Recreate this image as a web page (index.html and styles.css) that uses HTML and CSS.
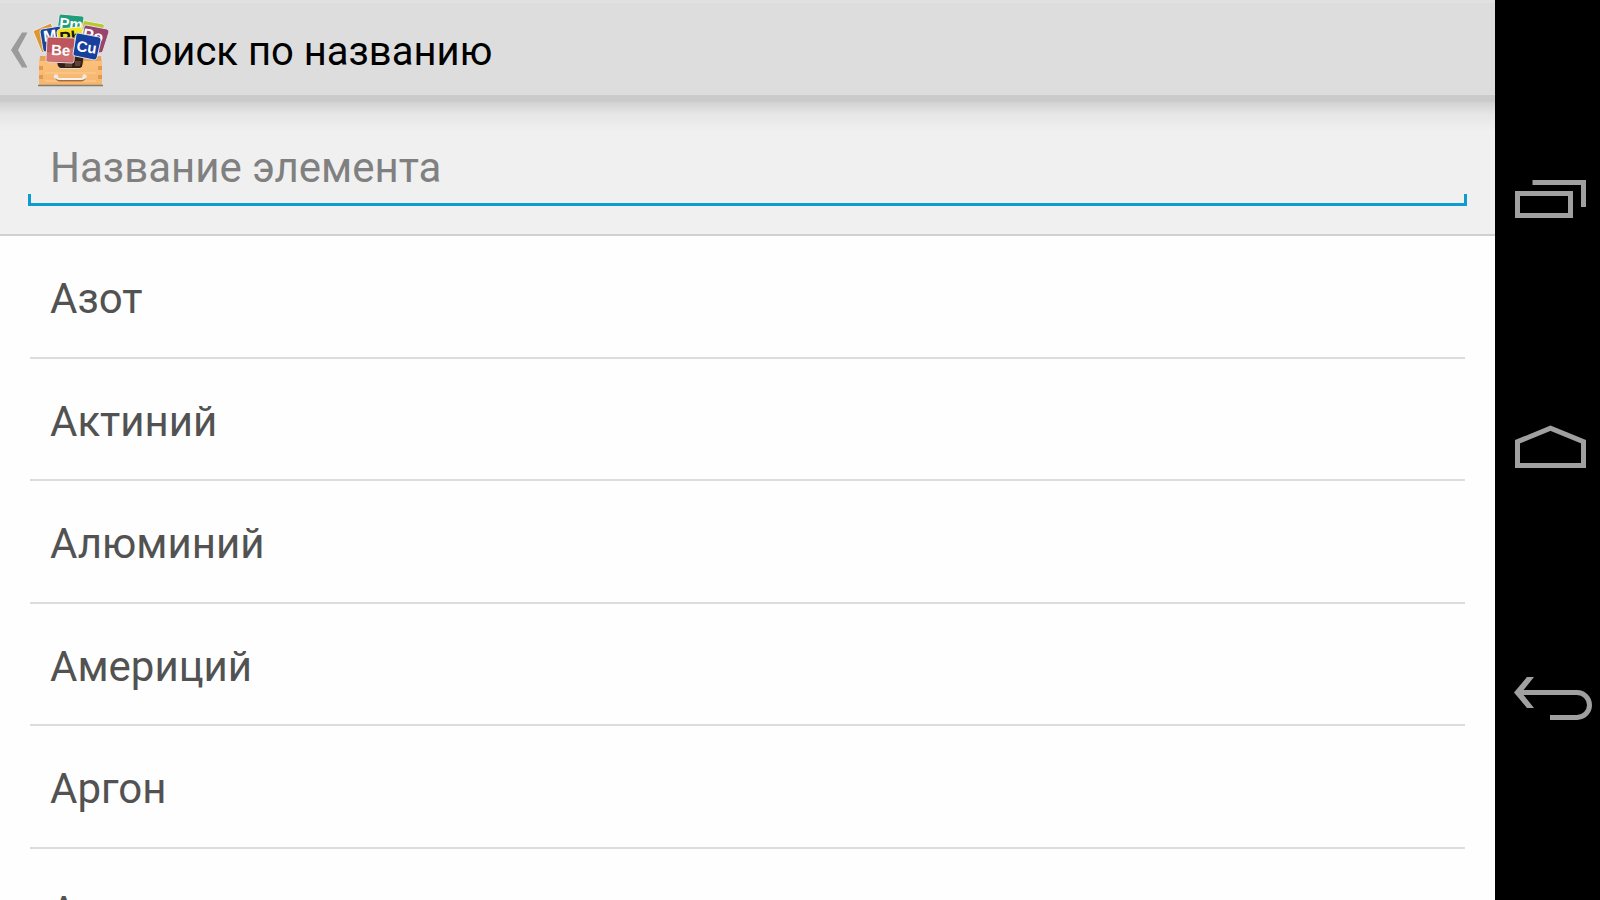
FILE: index.html
```html
<!DOCTYPE html>
<html lang="ru">
  <head>
    <meta charset="UTF-8">
    <meta name="viewport" content="width=device-width, initial-scale=1">
    <title>Поиск по названию</title>
    <link rel="stylesheet" href="styles.css">
  </head>
  <body>
    <div class="app">
      <header class="action-bar">
        <a class="up" href="#" aria-label="Назад">
          <svg class="chevron" viewBox="0 0 32 40" width="32" height="40">
            <path d="M11 20 22 2.500h5.500L18 20l9.500 17.500H22z" fill="#9b9b9b"/>
          </svg>
          <!-- Drawer full of element cards -->
          <svg class="logo" viewBox="32 10 80 80" width="80" height="80">
            <defs>
              <linearGradient id="wood" x1="0" y1="0" x2="0" y2="1">
                <stop offset="0" stop-color="#fac17c"/>
                <stop offset="1" stop-color="#f6b56c"/>
              </linearGradient>
            </defs>
            <g stroke="#eee9e2" stroke-width="1" stroke-linejoin="round">
              <path d="M33 31 51 23 58 42 42 53z" fill="#e0962f"/>
              <path d="M81 20 103 24Q105 25 104 28L101 42 78 38z" fill="#b4cb2c"/>
              <path d="M61 14 82 16Q84 16 84 18L81 34 57 31 59 16Q59 14 61 14z" fill="#1f9e7c"/>
            </g>
            <text x="59" y="28" font-size="15" fill="#fff" transform="rotate(5 59 28)">Pm</text>
            <path d="M86 25 107 29Q109 30 109 32L103 51Q102 53 100 53L80 49 84 27Q84 25 86 25z" fill="#97456f" stroke="#eadfe5"/>
            <text x="82" y="39" font-size="16" fill="#fff" transform="rotate(11 82 39)">Po</text>
            <path d="M42 29 60 26 65 50 46 52Q44 52 43 50L40 32Q40 29 42 29z" fill="#1d4297" stroke="#dfe2ea"/>
            <text x="44" y="42" font-size="16" fill="#fff" transform="rotate(-7 44 42)">Mo</text>
            <path d="M60 29 79 27Q81 27 82 29L85 48 62 51Q59 51 59 49L57 32Q57 30 60 29z" fill="#f2e51a" stroke="#f3f0cf"/>
            <text x="60" y="44" font-size="17" fill="#181818" transform="rotate(-5 60 44)">Pb</text>
            <path d="M40 56H101L102 66H39z" fill="#e8a35b"/>
            <path d="M56 54H84L82 67Q81 68 79 68H61Q59 68 58 66z" fill="#332018"/>
            <path d="M65 62H72V67H65zM75 61H81L80 66H75z" fill="#5d4433"/>
            <path d="M39 61H56Q57 68 62 69H78Q83 68 84 61H102V85H39z" fill="url(#wood)"/>
            <path d="M39 66H43V70H39zM39 75H43V79H39zM98 66H102V70H98zM98 75H102V79H98z" fill="#e39a4e"/>
            <path d="M45 73H96M45 81H96" stroke="#ffcd94" stroke-width="1"/>
            <path d="M38 85.500H103" stroke="#7d7c77" stroke-width="1.500"/>
            <path d="M56 78Q57 80.500 60 80.500H81Q84 80.500 85 78" stroke="#a8683a" stroke-width="2" fill="none"/>
            <path d="M56 77Q57 79 60 79H81Q84 79 85 77" stroke="#f4f0ec" stroke-width="2" fill="none"/>
            <circle cx="56" cy="76.500" r="2.200" fill="#eee9e5"/>
            <circle cx="84.500" cy="76.500" r="2.200" fill="#eee9e5"/>
            <path d="M49 37 73 38Q75 38 75 40L74 61Q74 63 72 63L48 62Q46 62 46 60L47 39Q47 37 49 37z" fill="#bd555d" stroke="#ead9d8"/>
            <path d="M47 52Q60 55 74 47L73.500 61Q73 62 72 62L48 61Q47 61 47 60z" fill="#d98484" opacity=".6"/>
            <text x="51" y="55" font-size="15" fill="#fff" transform="rotate(2 51 55)">Be</text>
            <path d="M78 33 99 37Q101 38 101 40L97 58Q96 60 94 60L75 56Q73 56 73 54L76 35Q76 33 78 33z" fill="#173f9d" stroke="#dfe2ea"/>
            <text x="76" y="51" font-size="15" fill="#fff" transform="rotate(8 76 51)">Cu</text>
          </svg>
        </a>
        <h1>Поиск по названию</h1>
      </header>

      <form class="search">
        <input class="search-field" type="text" placeholder="Название элемента" aria-label="Название элемента">
      </form>

      <ul class="elements">
        <li>Азот</li>
        <li>Актиний</li>
        <li>Алюминий</li>
        <li>Америций</li>
        <li>Аргон</li>
        <li>Астат</li>
      </ul>
    </div>

    <nav class="system-bar">
      <button type="button" aria-label="Недавние">
        <svg viewBox="0 0 105 60" width="105" height="60">
          <path d="M37.500 12.500H88.500V37M22.500 23.500H75.500V45.500H22.500z"/>
        </svg>
      </button>
      <button type="button" aria-label="Домой">
        <svg viewBox="0 0 105 60" width="105" height="60">
          <path d="M22.500 45.500V21.800L55.500 8.300 88.500 21.800V45.500z"/>
        </svg>
      </button>
      <button type="button" aria-label="Назад">
        <svg viewBox="0 0 105 60" width="105" height="60">
          <path d="M23 22.500H82A12.500 12.500 0 0 1 82 47.500H55"/>
          <path class="solid" d="M19 22.500 32 7h7L26.500 22.500 39 38h-7z"/>
        </svg>
      </button>
    </nav>
  </body>
</html>
```

FILE: styles.css
```css
html,
body {
  height: 100%;
  margin: 0;
}

body {
  display: flex;
  overflow: hidden;
  background: #000;
  color: #525252;
  font-family: Roboto, "Noto Sans", sans-serif;
  font-size: 42px;
}

.app {
  flex: 1;
  display: flex;
  flex-direction: column;
  min-width: 0;
  background: #fefefe;
}

/* Action bar */
.action-bar {
  display: flex;
  align-items: center;
  height: 90px;
  padding-top: 2px;
  background: #ddd;
  border-top: 3px solid #e1e1e1;
  border-bottom: 7px solid #cbcbcb;
}

.up {
  display: flex;
  align-items: center;
}

.logo {
  font-family: "Liberation Sans", sans-serif;
  font-weight: bold;
}

h1 {
  margin: 0 0 0 9px;
  padding-top: 4px;
  color: #000;
  font-size: 40px;
  font-weight: normal;
  line-height: 48px;
}

/* Search */
.search {
  padding: 32px 28px 28px;
  background: linear-gradient(#d2d2d2, #e6e6e6 12px, #f0f0f0 30px);
  border-bottom: 2px solid #d0d0d0;
}

.search-field {
  display: block;
  box-sizing: border-box;
  width: 100%;
  height: 72px;
  padding: 0 22px 6px;
  border: 0;
  outline: 0;
  /* underline with a short tick at each end */
  background:
    linear-gradient(#0e9bd0, #0e9bd0) left bottom / 3px 12px no-repeat,
    linear-gradient(#0e9bd0, #0e9bd0) right bottom / 3px 12px no-repeat,
    linear-gradient(#0e9bd0, #0e9bd0) left bottom / 100% 3px no-repeat;
  color: #525252;
  font: inherit;
}

.search-field::placeholder {
  color: #808080;
  opacity: 1;
}

/* Element list */
.elements {
  flex: 1;
  display: grid;
  grid-auto-rows: 123px 122px;
  align-content: start;
  min-height: 0;
  margin: 0;
  padding: 0 30px;
  overflow: hidden;
  list-style: none;
}

.elements li {
  display: flex;
  align-items: center;
  padding: 4px 20px 0;
  border-bottom: 2px solid #dcdcdc;
}

/* System buttons */
.system-bar {
  display: flex;
  flex-direction: column;
  justify-content: center;
  width: 105px;
}

.system-bar button {
  height: 250px;
  padding: 0;
  border: 0;
  background: none;
}

.system-bar svg {
  display: block;
}

.system-bar path {
  fill: none;
  stroke: #a0a0a0;
  stroke-width: 5;
}

.system-bar .solid {
  fill: #a0a0a0;
  stroke: none;
}
```
